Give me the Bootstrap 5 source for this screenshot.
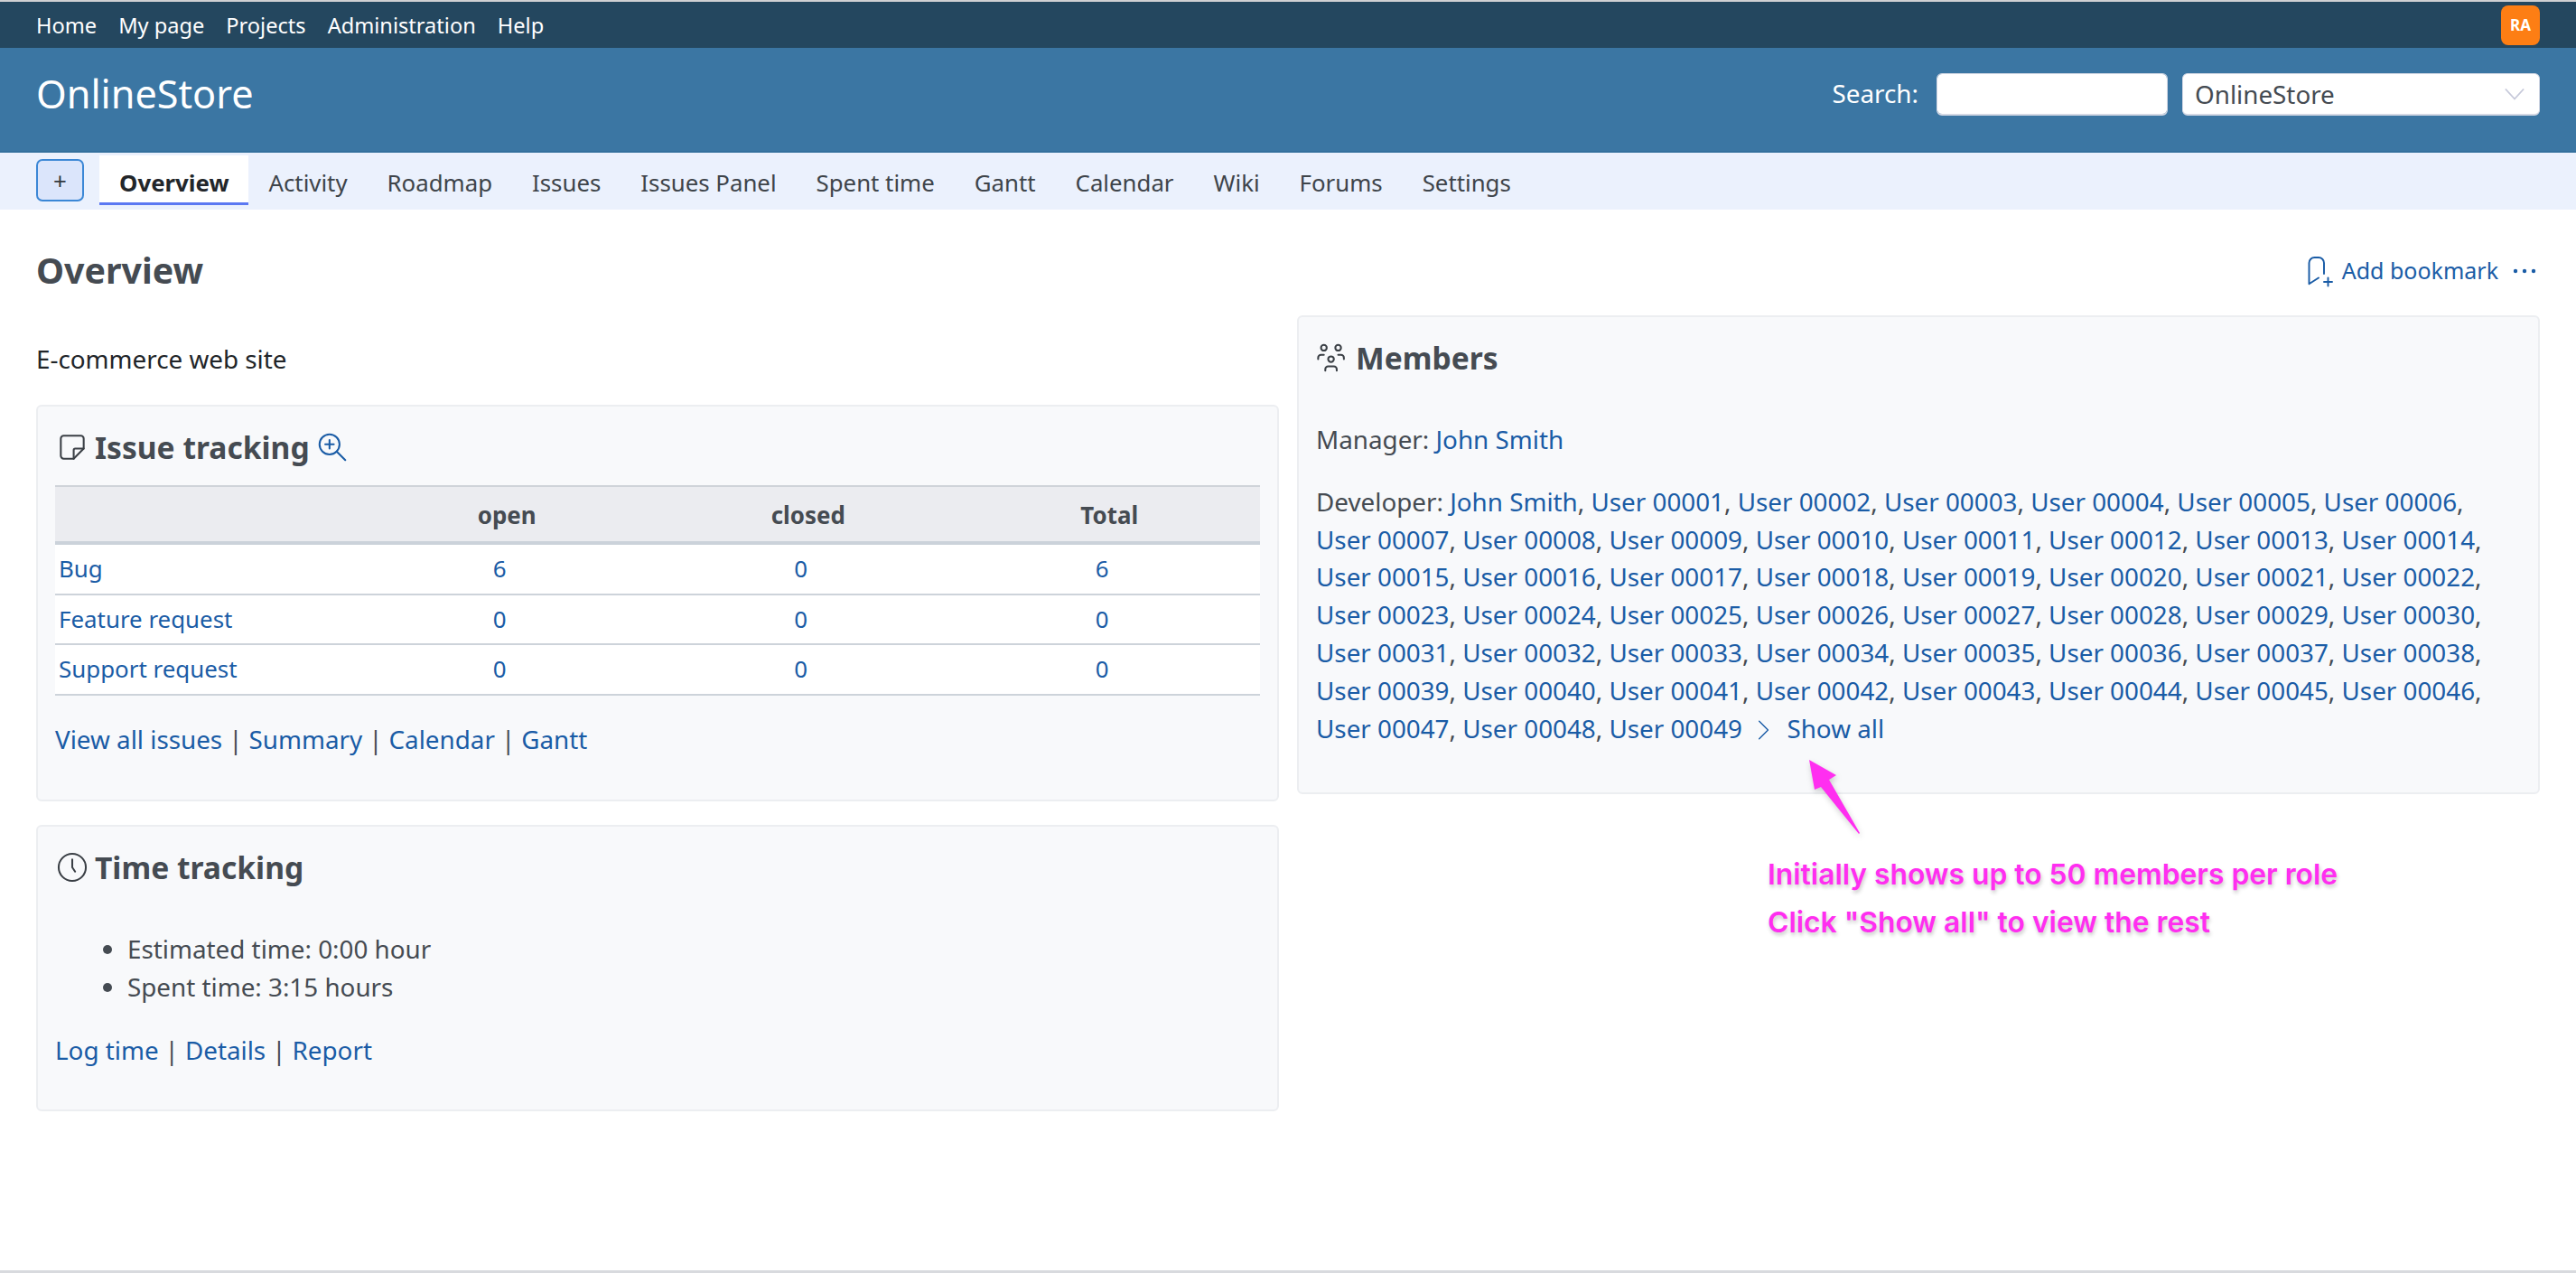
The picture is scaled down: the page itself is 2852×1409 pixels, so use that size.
<!DOCTYPE html>
<html lang="en">
<head>
    <meta charset="UTF-8">
    <meta name="viewport" content="width=device-width, initial-scale=1">
    <title>Overview - OnlineStore</title>
    <link href="https://cdn.jsdelivr.net/npm/bootstrap@5.3.0/dist/css/bootstrap.min.css" rel="stylesheet">
    <style>
        body {
            font-family: "Noto Sans", sans-serif;
            font-size: 27.8px;
            line-height: 41.8px;
            color: #454b52;
            background: #fff;
        }
        a { color: #1a5ca6; text-decoration: none; white-space: nowrap; }
        .ico { fill: none; stroke: currentColor; stroke-width: 1.3; stroke-linecap: round; stroke-linejoin: round; flex-shrink: 0; }

        .top-line { height: 2px; background: #cfd0d2; }
        .top-bar { height: 51px; background: #24475f; padding: 0 40px; }
        .top-bar .nav-link { color: #fff; font-size: 23.6px; line-height: 30px; padding: 0; margin-right: 24px; }
        .avatar-box { width: 43px; height: 44px; background: #fd7e14; color: #fff; font-size: 17px; font-weight: 700; border-radius: 8px; line-height: 44px; text-align: center; }

        .head-bar { height: 116px; background: #3b76a3; border-bottom: 2px solid #34709d; padding: 0 40px 12px; color: #fff; }
        .head-title { font-size: 43.2px; line-height: 60px; font-weight: 400; margin: 0; }
        .head-label { margin-right: 20px; }
        .head-input { width: 256px; height: 47px; border: 1px solid #d4d8e4; border-bottom-width: 2px; border-radius: 6px; padding: 0 12px; font-size: 27.8px; }
        .head-select { width: 396px; height: 47px; margin-left: 16px; border: 1px solid #d4d8e4; border-bottom-width: 2px; border-radius: 6px; padding: 0 46px 0 13px; font-size: 27.8px; line-height: 40px; color: #454b52;
            background-image: url("data:image/svg+xml,%3csvg xmlns='http://www.w3.org/2000/svg' viewBox='0 0 24 14'%3e%3cpath fill='none' stroke='%23c6c9da' stroke-width='2' d='M1 1l11 12L23 1'/%3e%3c/svg%3e");
            background-size: 22px 14px; background-position: right 16px center; }

        .tab-bar { height: 63px; background: #ebf1fd; padding: 3px 40px 0; }
        .add-btn { width: 53px; height: 47px; margin: 4px 17px 0 0; padding: 0; background: #dbe5fb; border: 2px solid #3b87d6; border-radius: 7px; color: #343a40; font-size: 26px; line-height: 40px; }
        .tab-bar .nav-link { height: 55px; padding: 4px 22px 0; font-size: 25.8px; line-height: 52px; color: #3e444a; }
        .tab-bar .nav-link.active { background: #fff; color: #22262a; font-weight: 700; border-bottom: 3px solid #5b78f2; }

        .page-body { padding: 44px 40px 0; }
        .page-title { font-size: 39.3px; line-height: 47px; font-weight: 700; color: #454b52; margin: 0; }
        .page-actions { font-size: 25px; line-height: 47px; padding-right: 4px; }
        .col-gap { gap: 20px; margin-top: 26px; }
        .col-half { flex: 1 1 0; min-width: 0; }
        .desc-text { color: #212529; margin: 28px 0 29px; }

        .box-card { background: #f8f9fb; border: 2px solid #eceef1; border-radius: 6px; padding: 23px 19px 45px; }
        .box-card + .box-card { margin-top: 26px; }
        .box-head { font-size: 33.6px; line-height: 44px; font-weight: 700; margin: 0; color: #454b52; }
        .box-title { gap: 6px; }
        .box-title .ico { color: #3a3f45; }
        .box-title a .ico { color: #1a5ca6; }
        .links-row { margin: 28px 0 0; }
        .sep { color: #454b52; margin: 0 7px; }

        .issue-table { --bs-table-bg: #fff; --bs-table-color: #454b52; margin: 20px 0 0; table-layout: fixed; border-color: #cdd3da; }
        .issue-table th { background: #ebecf0; font-size: 25.9px; line-height: 38px; font-weight: 700; text-align: center; padding: 12px 0 10px; border-top: 2px solid #cfd3d9; border-bottom: 4px solid #cbd2da; color: #454b52; }
        .issue-table td { padding: 6px 16px 6px 0; text-align: center; border-bottom: 2px solid #cdd3da; line-height: 41.8px; font-size: 25.9px; }
        .issue-table td:first-child { text-align: left; padding-left: 4px; padding-right: 0; }

        .stat-list { margin: 48px 0 0; padding-left: 80px; }
        .members-box { padding-bottom: 23px; }
        .members-box .box-title { margin-bottom: 48px; }
        .member-line { margin: 0 0 27px; }
        .show-all { margin-left: 3px; }
        .show-all .ico { vertical-align: -4px; margin-right: 6px; }

        .note-arrow { position: absolute; left: 1995px; top: 835px; filter: drop-shadow(1px 3px 3px rgba(0,0,0,.2)); }
        .note-text { position: absolute; left: 1957px; top: 941px; font-family: Inter, sans-serif; font-size: 31.8px; line-height: 53px; font-weight: 600; color: #ff2ef0; text-shadow: 1px 3px 4px rgba(0,0,0,.22); white-space: nowrap; }
        .bottom-line { height: 3px; background: #d8dade; margin-top: auto; }
    </style>
</head>
<body>
<div class="d-flex flex-column min-vh-100">
    <div class="top-line"></div>
    <div class="top-bar d-flex align-items-center justify-content-between">
        <nav class="nav">
            <a class="nav-link" href="#">Home</a>
            <a class="nav-link" href="#">My page</a>
            <a class="nav-link" href="#">Projects</a>
            <a class="nav-link" href="#">Administration</a>
            <a class="nav-link" href="#">Help</a>
        </nav>
        <div class="avatar-box">RA</div>
    </div>
    <div class="head-bar d-flex align-items-center justify-content-between">
        <h1 class="head-title">OnlineStore</h1>
        <form class="d-flex align-items-center">
            <label class="head-label" for="q">Search:</label>
            <input class="form-control head-input" id="q" type="text">
            <select class="form-select head-select"><option>OnlineStore</option></select>
        </form>
    </div>
    <div class="tab-bar d-flex align-items-start">
        <button type="button" class="btn add-btn">+</button>
        <nav class="nav">
            <a class="nav-link active" href="#">Overview</a>
            <a class="nav-link" href="#">Activity</a>
            <a class="nav-link" href="#">Roadmap</a>
            <a class="nav-link" href="#">Issues</a>
            <a class="nav-link" href="#">Issues Panel</a>
            <a class="nav-link" href="#">Spent time</a>
            <a class="nav-link" href="#">Gantt</a>
            <a class="nav-link" href="#">Calendar</a>
            <a class="nav-link" href="#">Wiki</a>
            <a class="nav-link" href="#">Forums</a>
            <a class="nav-link" href="#">Settings</a>
        </nav>
    </div>

    <div class="page-body">
        <div class="d-flex justify-content-between align-items-center">
            <h2 class="page-title">Overview</h2>
            <div class="page-actions d-flex align-items-center">
                <a href="#" class="d-flex align-items-center gap-2">
                    <svg class="ico" width="36" height="36" viewBox="0 0 24 24"><path d="M12 17l-7 4.5V6a4 4 0 0 1 4 -4h3a4 4 0 0 1 4 4v8"/><path d="M16 20h6M19 17v6"/></svg>
                    Add bookmark
                </a>
                <a href="#" class="d-flex ms-3">
                    <svg width="26" height="8" viewBox="0 0 26 8"><circle cx="3" cy="4" r="2.2" fill="currentColor"/><circle cx="13" cy="4" r="2.2" fill="currentColor"/><circle cx="23" cy="4" r="2.2" fill="currentColor"/></svg>
                </a>
            </div>
        </div>

        <div class="d-flex align-items-start col-gap">
            <div class="col-half">
                <p class="desc-text">E-commerce web site</p>

                <div class="box-card">
                    <div class="d-flex align-items-center box-title">
                        <svg class="ico" width="38" height="38" viewBox="0 0 24 24"><path d="M13 20l7 -7"/><path d="M13 20v-6a1 1 0 0 1 1 -1h6v-7a2 2 0 0 0 -2 -2h-12a2 2 0 0 0 -2 2v12a2 2 0 0 0 2 2h7"/></svg>
                        <h3 class="box-head">Issue tracking</h3>
                        <a href="#" class="d-flex"><svg class="ico" width="38" height="38" viewBox="0 0 24 24"><path d="M10 10m-7 0a7 7 0 1 0 14 0a7 7 0 1 0 -14 0"/><path d="M7 10h6M10 7v6"/><path d="M21 21l-6 -6"/></svg></a>
                    </div>
                    <table class="table issue-table">
                        <thead><tr><th></th><th>open</th><th>closed</th><th>Total</th></tr></thead>
                        <tbody>
                            <tr><td><a href="#">Bug</a></td><td><a href="#">6</a></td><td><a href="#">0</a></td><td><a href="#">6</a></td></tr>
                            <tr><td><a href="#">Feature request</a></td><td><a href="#">0</a></td><td><a href="#">0</a></td><td><a href="#">0</a></td></tr>
                            <tr><td><a href="#">Support request</a></td><td><a href="#">0</a></td><td><a href="#">0</a></td><td><a href="#">0</a></td></tr>
                        </tbody>
                    </table>
                    <p class="links-row"><a href="#">View all issues</a><span class="sep">|</span><a href="#">Summary</a><span class="sep">|</span><a href="#">Calendar</a><span class="sep">|</span><a href="#">Gantt</a></p>
                </div>

                <div class="box-card">
                    <div class="d-flex align-items-center box-title">
                        <svg class="ico" width="38" height="38" viewBox="0 0 24 24"><circle cx="12" cy="12" r="9.5"/><path d="M12 6.5v5.5l2 3"/></svg>
                        <h3 class="box-head">Time tracking</h3>
                    </div>
                    <ul class="stat-list">
                        <li>Estimated time: 0:00 hour</li>
                        <li>Spent time: 3:15 hours</li>
                    </ul>
                    <p class="links-row"><a href="#">Log time</a><span class="sep">|</span><a href="#">Details</a><span class="sep">|</span><a href="#">Report</a></p>
                </div>
            </div>

            <div class="col-half">
                <div class="box-card members-box">
                    <div class="d-flex align-items-center box-title">
                        <svg class="ico" width="38" height="38" viewBox="1.5 0 24 24"><path d="M10 13a2 2 0 1 0 4 0a2 2 0 0 0 -4 0"/><path d="M8 21v-1a2 2 0 0 1 2 -2h4a2 2 0 0 1 2 2v1"/><path d="M15 5a2 2 0 1 0 4 0a2 2 0 0 0 -4 0"/><path d="M17 10h2a2 2 0 0 1 2 2v1"/><path d="M5 5a2 2 0 1 0 4 0a2 2 0 0 0 -4 0"/><path d="M3 13v-1a2 2 0 0 1 2 -2h2"/></svg>
                        <h3 class="box-head">Members</h3>
                    </div>
                    <p class="member-line">Manager: <a href="#">John Smith</a></p>
                    <p class="member-line">Developer: <a href="#">John Smith</a>, <a href="#">User 00001</a>, <a href="#">User 00002</a>, <a href="#">User 00003</a>, <a href="#">User 00004</a>, <a href="#">User 00005</a>, <a href="#">User 00006</a>,
                        <a href="#">User 00007</a>, <a href="#">User 00008</a>, <a href="#">User 00009</a>, <a href="#">User 00010</a>, <a href="#">User 00011</a>, <a href="#">User 00012</a>, <a href="#">User 00013</a>, <a href="#">User 00014</a>,
                        <a href="#">User 00015</a>, <a href="#">User 00016</a>, <a href="#">User 00017</a>, <a href="#">User 00018</a>, <a href="#">User 00019</a>, <a href="#">User 00020</a>, <a href="#">User 00021</a>, <a href="#">User 00022</a>,
                        <a href="#">User 00023</a>, <a href="#">User 00024</a>, <a href="#">User 00025</a>, <a href="#">User 00026</a>, <a href="#">User 00027</a>, <a href="#">User 00028</a>, <a href="#">User 00029</a>, <a href="#">User 00030</a>,
                        <a href="#">User 00031</a>, <a href="#">User 00032</a>, <a href="#">User 00033</a>, <a href="#">User 00034</a>, <a href="#">User 00035</a>, <a href="#">User 00036</a>, <a href="#">User 00037</a>, <a href="#">User 00038</a>,
                        <a href="#">User 00039</a>, <a href="#">User 00040</a>, <a href="#">User 00041</a>, <a href="#">User 00042</a>, <a href="#">User 00043</a>, <a href="#">User 00044</a>, <a href="#">User 00045</a>, <a href="#">User 00046</a>,
                        <a href="#">User 00047</a>, <a href="#">User 00048</a>, <a href="#">User 00049</a>
                        <a href="#" class="show-all"><svg class="ico" width="26" height="26" viewBox="0 0 24 24"><path d="M8 3l9 9l-9 9"/></svg> Show all</a></p>
                </div>
            </div>
        </div>
    </div>

    <svg class="note-arrow" width="72" height="94" viewBox="0 0 72 94"><path d="M8 6L38 23L30 28L64 87L63 88L21 36L14 39Z" fill="#ff2ef0"/></svg>
    <div class="note-text">Initially shows up to 50 members per role<br>Click "Show all" to view the rest</div>

    <div class="bottom-line"></div>
</div>
<script src="https://cdn.jsdelivr.net/npm/bootstrap@5.3.0/dist/js/bootstrap.bundle.min.js"></script>
</body>
</html>
